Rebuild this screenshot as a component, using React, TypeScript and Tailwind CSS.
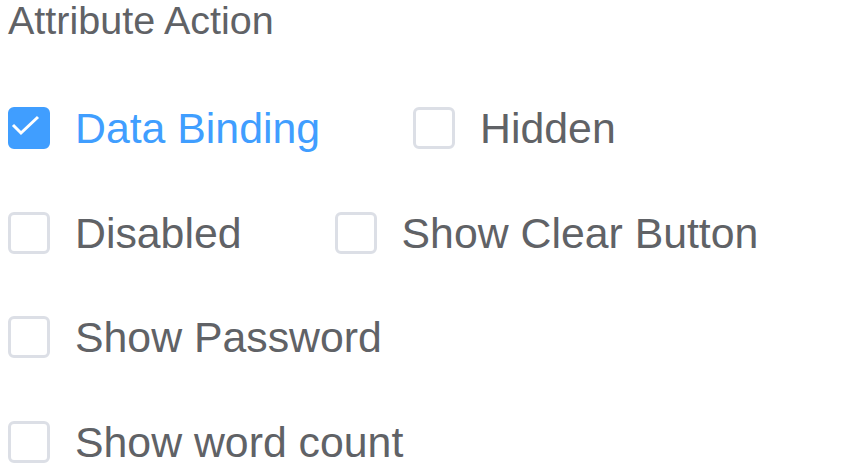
import React, { useState } from "react";

type Option = { key: string; label: string };

const rows: Option[][] = [
  [
    { key: "binding", label: "Data Binding" },
    { key: "hidden", label: "Hidden" },
  ],
  [
    { key: "disabled", label: "Disabled" },
    { key: "clearable", label: "Show Clear Button" },
  ],
  [{ key: "password", label: "Show Password" }],
  [{ key: "wordCount", label: "Show word count" }],
];

function Checkbox({
  label,
  checked,
  onToggle,
}: {
  label: string;
  checked: boolean;
  onToggle: () => void;
}) {
  return (
    <label
      onClick={onToggle}
      className="flex items-center mr-[93px] cursor-pointer select-none"
    >
      <span
        className={`w-[42px] h-[42px] rounded-[6px] border-[3px] box-border flex items-center justify-center ${
          checked ? "bg-[#409eff] border-[#409eff]" : "bg-white border-[#dcdfe6]"
        }`}
      >
        {checked && (
          <svg width="42" height="42" viewBox="0 0 42 42" className="shrink-0">
            <polyline
              points="8,21 16,29 33,13"
              fill="none"
              stroke="white"
              strokeWidth="3"
              transform="translate(-3,-3)"
            />
          </svg>
        )}
      </span>
      <span
        className={`pl-[25px] text-[42.8px] leading-[42px] whitespace-nowrap ${
          checked ? "text-[#409eff]" : "text-[#606266]"
        }`}
      >
        {label}
      </span>
    </label>
  );
}

export default function App() {
  const [checked, setChecked] = useState<Record<string, boolean>>({ binding: true });

  const toggle = (key: string) => setChecked((c) => ({ ...c, [key]: !c[key] }));

  return (
    <div
      className="w-[864px] h-[469px] bg-white pl-[8px] overflow-hidden"
      style={{ fontFamily: '"Liberation Sans", Arial, sans-serif' }}
    >
      <div className="text-[39.5px] leading-[40px] text-[#606266] whitespace-nowrap">
        Attribute Action
      </div>
      <div className="mt-[67px] flex flex-col gap-[62.7px]">
        {rows.map((row, i) => (
          <div key={i} className="flex h-[42px]">
            {row.map((opt) => (
              <Checkbox
                key={opt.key}
                label={opt.label}
                checked={!!checked[opt.key]}
                onToggle={() => toggle(opt.key)}
              />
            ))}
          </div>
        ))}
      </div>
    </div>
  );
}
